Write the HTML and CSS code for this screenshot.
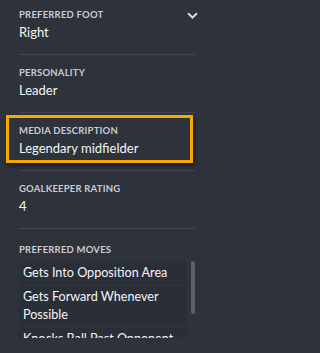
FILE: index.html
```html
<!DOCTYPE html>
<html lang="en">
<head>
<meta charset="utf-8">
<link rel="stylesheet" href="styles.css">
</head>
<body>
<div class="panel">
  <svg class="chevron" width="11" height="7" viewBox="0 0 11 7"><path d="M1 1.2 L5.5 5.5 L10 1.2" fill="none" stroke="#d4d7dc" stroke-width="2"/></svg>
  <div class="field">
    <div class="label">Preferred Foot</div>
    <div class="value">Right</div>
  </div>
  <div class="field">
    <div class="label">Personality</div>
    <div class="value">Leader</div>
  </div>
  <div class="field highlighted">
    <div class="label">Media Description</div>
    <div class="value">Legendary midfielder</div>
  </div>
  <div class="field">
    <div class="label">Goalkeeper Rating</div>
    <div class="value">4</div>
  </div>
  <div class="field moves">
    <div class="label">Preferred Moves</div>
    <div class="moves-wrap">
      <ul class="moves-list">
        <li>Gets Into Opposition Area</li>
        <li>Gets Forward Whenever Possible</li>
        <li>Knocks Ball Past Opponent</li>
      </ul>
      <div class="scrollbar"><div class="thumb"></div></div>
    </div>
  </div>
</div>
</body>
</html>
```
FILE: styles.css
```css
html, body {
  margin: 0;
  padding: 0;
  background: #2e323b;
}
body {
  width: 204px;
  height: 353px;
  overflow: hidden;
  font-family: Lato, "Noto Sans", sans-serif;
  color: #f4f5f7;
}
.panel {
  position: relative;
  padding: 0 8px 0 19px;
}
.chevron {
  position: absolute;
  top: 12px;
  right: 6px;
}
.field {
  position: relative;
  padding: 12px 0 13px;
  border-bottom: 1px solid #41454e;
}
.field:first-of-type {
  padding-top: 9px;
}
.label {
  font-size: 9.5px;
  line-height: 11px;
  font-weight: 700;
  text-transform: uppercase;
  color: #c9ccd3;
  letter-spacing: 0.2px;
}
.value {
  margin-top: 3px;
  font-size: 13px;
  line-height: 18px;
  color: #f4f5f7;
}
.highlighted::before {
  content: "";
  position: absolute;
  left: -13px;
  right: 3px;
  top: 2px;
  bottom: 7px;
  border: 3px solid #f7a800;
  box-shadow: 2px 3px 4px rgba(0, 0, 0, 0.45);
  pointer-events: none;
}
.moves {
  padding-top: 15px;
  border-bottom: none;
}
.moves-wrap {
  margin-top: 5px;
  height: 78px;
  display: flex;
  gap: 4px;
}
.moves-list {
  flex: 1;
  margin: 0;
  padding: 2px 0 0;
  list-style: none;
  overflow: hidden;
  display: flex;
  flex-direction: column;
  gap: 2px;
}
.moves-list li {
  padding: 2px 6px 2px 4px;
  font-size: 12.6px;
  line-height: 18px;
  background: #2a2e36;
  flex: none;
}
.scrollbar {
  width: 4px;
  margin-right: 1px;
  padding-top: 1px;
}
.thumb {
  height: 53px;
  border-radius: 2px;
  background: #5b5f68;
}
```
